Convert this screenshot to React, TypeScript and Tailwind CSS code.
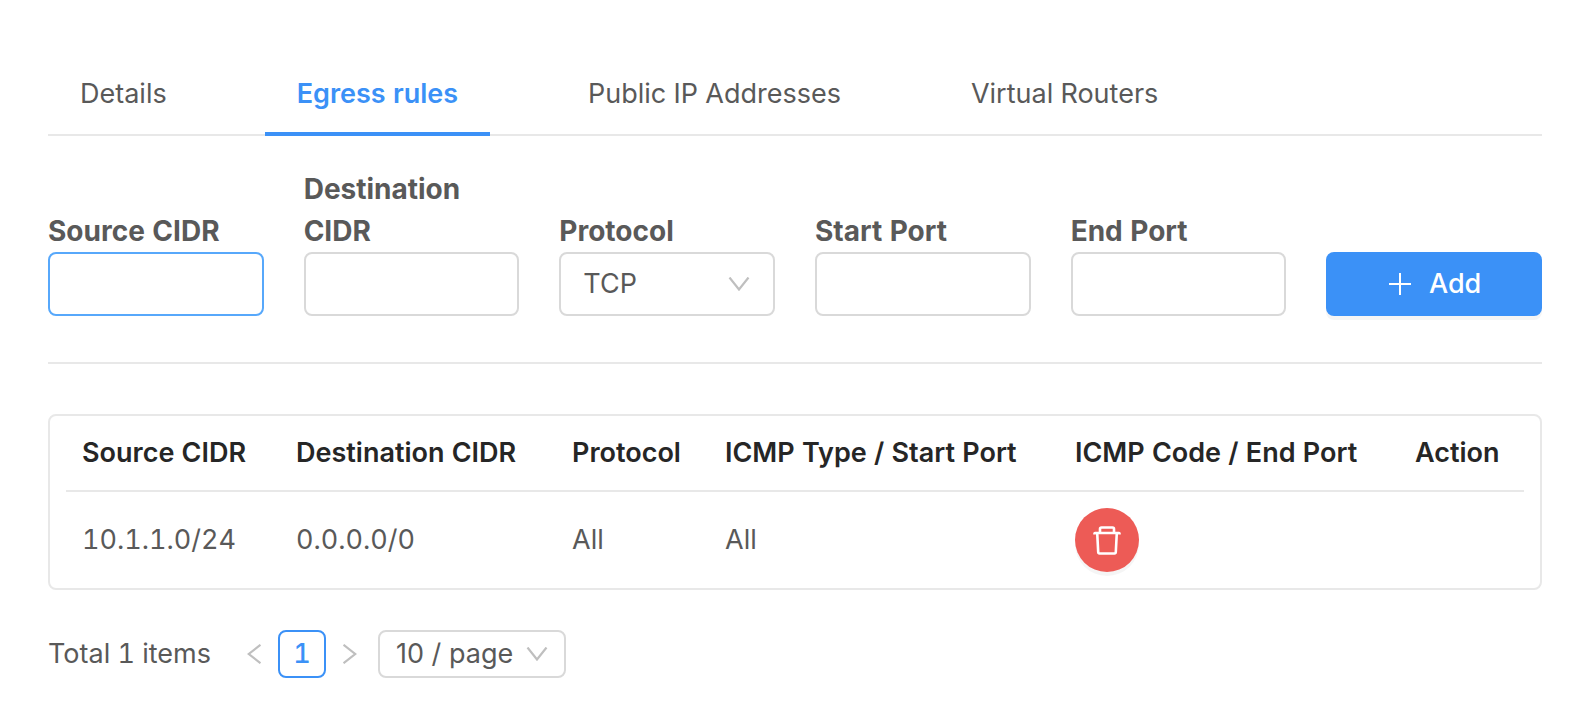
import { useState } from 'react'

const tabs = ['Details', 'Egress rules', 'Public IP Addresses', 'Virtual Routers']

const columns = [
  { title: 'Source CIDR', width: 'w-[214px]' },
  { title: 'Destination CIDR', width: 'w-[276px]' },
  { title: 'Protocol', width: 'w-[153px]' },
  { title: 'ICMP Type / Start Port', width: 'w-[350px]' },
  { title: 'ICMP Code / End Port', width: 'w-[340px]' },
  { title: 'Action', width: 'w-[125px]' },
]

const rules = [{ id: 1, source: '10.1.1.0/24', destination: '0.0.0.0/0', protocol: 'All', start: 'All' }]

const labelClass = 'block text-[28px] leading-[42px] font-bold'
const inputClass = 'h-16 w-full min-w-0 rounded-lg border-2 bg-white px-[22px] outline-none'

function DownIcon({ className }: { className: string }) {
  return (
    <svg viewBox="0 0 22 14" className={`pointer-events-none h-[14px] w-[22px] ${className}`} fill="none" aria-hidden="true">
      <path d="M1.5 0.5 L11 12.5 L20.5 0.5" stroke="#bfbfbf" strokeWidth="2.2" />
    </svg>
  )
}

function ArrowIcon({ className }: { className?: string }) {
  return (
    <svg viewBox="0 0 14 20" className={`h-5 w-[14px] ${className ?? ''}`} fill="none" aria-hidden="true">
      <path d="M13.5 0.8 L1.8 10 L13.5 19.2" stroke="#bfbfbf" strokeWidth="2.2" />
    </svg>
  )
}

function PlusIcon() {
  return (
    <svg viewBox="0 0 22 22" className="h-[22px] w-[22px]" fill="none" aria-hidden="true">
      <path d="M11 0V22M0 11H22" stroke="white" strokeWidth="2" />
    </svg>
  )
}

function TrashIcon() {
  return (
    <svg viewBox="0 0 28 30" className="h-[30px] w-7" fill="none" stroke="white" strokeWidth="2.6" aria-hidden="true">
      <path d="M1.5 9.5V8.5Q1.5 8 2 8H26Q26.500 8 26.500 8.500V9.500" />
      <path d="M7 8V4Q7 2.500 8.500 2.500H19.500Q21 2.500 21 4V8" />
      <path d="M4.200 8L5.200 27Q5.300 28.500 6.500 28.500H21.500Q22.700 28.500 22.800 27L23.800 8" />
    </svg>
  )
}

export default function App() {
  const [activeTab, setActiveTab] = useState('Egress rules')

  return (
    <main className="bg-white pt-[50px] pr-[46px] pb-12 pl-12 font-['Inter',sans-serif] text-[27px] leading-[42px] text-[#595959] tabular-nums">
      <nav role="tablist" className="flex gap-[66px] border-b-2 border-[#e8e8e8]">
        {tabs.map((tab) => (
          <button
            key={tab}
            type="button"
            role="tab"
            aria-selected={tab === activeTab}
            onClick={() => setActiveTab(tab)}
            className={
              tab === activeTab
                ? '-mb-[2px] h-[86px] border-b-4 border-[#3b91f7] px-8 pt-1.5 font-semibold text-[#3b91f7]'
                : '-mb-[2px] h-[86px] border-b-4 border-transparent px-8 pt-1.5'
            }
          >
            {tab}
          </button>
        ))}
      </nav>

      <form className="mt-8 grid grid-cols-6 items-end gap-10" onSubmit={(e) => e.preventDefault()}>
        <div>
          <label htmlFor="source" className={labelClass}>Source CIDR</label>
          <input id="source" type="text" className={`${inputClass} border-[#57a8fb]`} />
        </div>
        <div>
          <label htmlFor="destination" className={labelClass}>Destination CIDR</label>
          <input id="destination" type="text" className={`${inputClass} border-[#d9d9d9]`} />
        </div>
        <div>
          <label htmlFor="protocol" className={labelClass}>Protocol</label>
          <div className="relative">
            <select id="protocol" className={`${inputClass} appearance-none border-[#d9d9d9]`}>
              <option>TCP</option>
              <option>UDP</option>
              <option>ICMP</option>
              <option>All</option>
            </select>
            <DownIcon className="absolute top-[25px] right-[25px]" />
          </div>
        </div>
        <div>
          <label htmlFor="start" className={labelClass}>Start Port</label>
          <input id="start" type="text" className={`${inputClass} border-[#d9d9d9]`} />
        </div>
        <div>
          <label htmlFor="end" className={labelClass}>End Port</label>
          <input id="end" type="text" className={`${inputClass} border-[#d9d9d9]`} />
        </div>
        <button
          type="submit"
          className="flex h-16 items-center justify-center gap-[18px] rounded-lg bg-[#3b91f7] pl-0.5 font-medium text-white shadow-[0_4px_0_rgba(0,0,0,0.04)]"
        >
          <PlusIcon />
          Add
        </button>
      </form>

      <hr className="mt-[46px] mb-[50px] border-t-2 border-[#e8e8e8]" />

      <div className="rounded-lg border-2 border-[#e8e8e8] px-4">
        <table className="w-full table-fixed text-left">
          <thead>
            <tr className="h-[75px] border-b-2 border-[#e8e8e8] text-[#262626]">
              {columns.map((col) => (
                <th key={col.title} className={`${col.width} pl-4 font-semibold whitespace-nowrap`}>
                  {col.title}
                </th>
              ))}
            </tr>
          </thead>
          <tbody>
            {rules.map((rule) => (
              <tr key={rule.id} className="h-[97px]">
                <td className="pl-4">{rule.source}</td>
                <td className="pl-4">{rule.destination}</td>
                <td className="pl-4">{rule.protocol}</td>
                <td className="pl-4">{rule.start}</td>
                <td className="pl-4">
                  <button
                    type="button"
                    aria-label="Delete rule"
                    className="flex h-16 w-16 items-center justify-center rounded-full bg-[#ed5b56] shadow-[0_4px_0_rgba(0,0,0,0.04)]"
                  >
                    <TrashIcon />
                  </button>
                </td>
                <td />
              </tr>
            ))}
          </tbody>
        </table>
      </div>

      <div className="mt-10 flex h-12 items-center">
        <span className="w-[182px] whitespace-nowrap">Total 1 items</span>
        <button type="button" aria-label="Previous page" className="flex h-12 w-12 items-center justify-center">
          <ArrowIcon />
        </button>
        <button type="button" className="h-12 w-12 rounded-lg border-2 border-[#3b91f7] font-medium text-[#3b91f7]">
          1
        </button>
        <button type="button" aria-label="Next page" className="flex h-12 w-12 items-center justify-center">
          <ArrowIcon className="rotate-180" />
        </button>
        <div className="relative ml-1">
          <select
            aria-label="Page size"
            className="h-12 w-[188px] appearance-none rounded-lg border-2 border-[#d9d9d9] bg-white pl-4 proportional-nums outline-none"
          >
            <option>10 / page</option>
            <option>20 / page</option>
            <option>50 / page</option>
          </select>
          <DownIcon className="absolute top-[17px] right-[18px]" />
        </div>
      </div>
    </main>
  )
}
